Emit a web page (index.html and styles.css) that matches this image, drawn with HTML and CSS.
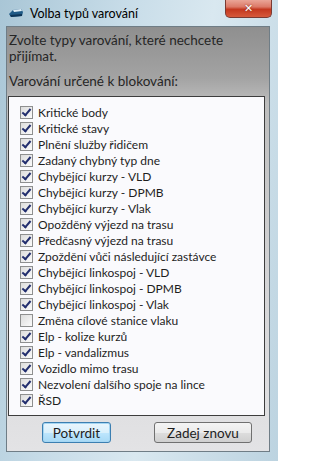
FILE: index.html
```html
<!DOCTYPE html>
<html lang="cs">
<head>
<meta charset="utf-8">
<title>Volba typů varování</title>
<link rel="stylesheet" href="styles.css">
</head>
<body>
<div class="window">
  <div class="titlebar">
    <svg class="app-icon" width="16" height="12" viewBox="0 0 16 12">
      <path d="M1 7 L5 3 L13 2 L15 5 L14 9 L3 10 Z" fill="#1f5a86"/>
      <path d="M5 3 L13 2 L14 4 L6 5 Z" fill="#dfeef6"/>
      <path d="M2 8 L14 7 L14 9 L3 10 Z" fill="#0d3557"/>
    </svg>
    <span class="title">Volba typů varování</span>
    <div class="close"><span class="close-x">✕</span></div>
  </div>
  <div class="client">
    <p class="intro">Zvolte typy varování, které nechcete přijímat.</p>
    <p class="label">Varování určené k blokování:</p>
    <div class="list">
      <div class="item"><span class="box on"></span>Kritické body</div>
      <div class="item"><span class="box on"></span>Kritické stavy</div>
      <div class="item"><span class="box on"></span>Plnění služby řidičem</div>
      <div class="item"><span class="box on"></span>Zadaný chybný typ dne</div>
      <div class="item"><span class="box on"></span>Chybějící kurzy - VLD</div>
      <div class="item"><span class="box on"></span>Chybějící kurzy - DPMB</div>
      <div class="item"><span class="box on"></span>Chybějící kurzy - Vlak</div>
      <div class="item"><span class="box on"></span>Opožděný výjezd na trasu</div>
      <div class="item"><span class="box on"></span>Předčasný výjezd na trasu</div>
      <div class="item"><span class="box on"></span>Zpoždění vůči následující zastávce</div>
      <div class="item"><span class="box on"></span>Chybějící linkospoj - VLD</div>
      <div class="item"><span class="box on"></span>Chybějící linkospoj - DPMB</div>
      <div class="item"><span class="box on"></span>Chybějící linkospoj - Vlak</div>
      <div class="item"><span class="box"></span>Změna cílové stanice vlaku</div>
      <div class="item"><span class="box on"></span>Elp - kolize kurzů</div>
      <div class="item"><span class="box on"></span>Elp - vandalizmus</div>
      <div class="item"><span class="box on"></span>Vozidlo mimo trasu</div>
      <div class="item"><span class="box on"></span>Nezvolení dalšího spoje na lince</div>
      <div class="item"><span class="box on"></span>ŘSD</div>
    </div>
    <div class="buttons">
      <button class="btn default">Potvrdit</button>
      <button class="btn">Zadej znovu</button>
    </div>
  </div>
</div>
</body>
</html>
```

FILE: styles.css
```css
html, body {
  margin: 0;
  padding: 0;
  background: #ffffff;
}

.window {
  width: 278px;
  height: 461px;
  box-sizing: border-box;
  display: flex;
  flex-direction: column;
  padding: 0 8px 9px 6px;
  background: linear-gradient(100deg, #a9c6d6 0%, #c7dce8 35%, #d9e8f0 60%, #bcd3e0 100%);
  font-family: "Lato", "Open Sans", sans-serif;
  color: #1e1e1e;
}

.titlebar {
  height: 26px;
  flex: none;
  display: flex;
  align-items: center;
  position: relative;
}

.app-icon {
  margin: 0 6px 0 2px;
}

.title {
  font-size: 12.5px;
  color: #000;
}

.close {
  position: absolute;
  top: 0;
  right: -2px;
  width: 47px;
  height: 18px;
  box-sizing: border-box;
  border: 1px solid #7a3a32;
  border-top: none;
  border-radius: 0 0 5px 5px;
  background: linear-gradient(#eaa597 0%, #dc7a68 40%, #c4381f 55%, #d65a3c 100%);
  display: flex;
  align-items: center;
  justify-content: center;
}

.close-x {
  color: #fff;
  font-family: "DejaVu Sans", sans-serif;
  font-size: 11px;
  font-weight: bold;
  line-height: 1;
  text-shadow: 0 0 2px #7a2010;
}

.client {
  flex: 1;
  display: flex;
  flex-direction: column;
  border: 1px solid #6f7d86;
  background: linear-gradient(#8f8f8f 0%, #a3a3a3 12%, #bdbdbd 18%, #d4d4d6 60%, #e3e3e5 100%);
  padding: 5px 4px 0 1px;
}

.intro {
  margin: 0 0 0 1px;
  font-size: 13.5px;
  line-height: 16px;
  color: #262626;
}

.label {
  margin: 9px 0 0 1px;
  font-size: 13.5px;
  line-height: 16px;
  color: #262626;
}

.list {
  margin-top: 7px;
  height: 320px;
  box-sizing: border-box;
  border: 1px solid #3d3d3d;
  background: #fafafd;
  padding: 7px 0 0 11px;
}

.item {
  height: 16px;
  display: flex;
  align-items: center;
  font-size: 12px;
  color: #1e1e1e;
  white-space: nowrap;
}

.box {
  width: 11px;
  height: 11px;
  flex: none;
  border: 1px solid #8e8f8f;
  background: linear-gradient(135deg, #dcdcdc, #fbfbfb);
  margin-right: 5px;
  position: relative;
}

.box.on::after {
  content: "";
  position: absolute;
  left: 3px;
  top: 0px;
  width: 3px;
  height: 7px;
  border-right: 2px solid #222e6e;
  border-bottom: 2px solid #222e6e;
  transform: rotate(40deg);
}

.buttons {
  display: flex;
  gap: 43px;
  padding: 6px 0 0 34px;
}

.btn {
  height: 21px;
  box-sizing: border-box;
  padding: 0;
  font-family: "Lato", "Open Sans", sans-serif;
  font-size: 13.5px;
  color: #1e1e1e;
  border: 1px solid #707070;
  border-radius: 3px;
  background: linear-gradient(#f4f4f4 0%, #ebebeb 50%, #dddddd 51%, #cfcfcf 100%);
  width: 98px;
}

.btn.default {
  width: 69px;
  border-color: #3c7fb1;
  background: linear-gradient(#eaf6fd 0%, #d9f0fc 50%, #bee6fd 51%, #a7d9f5 100%);
  box-shadow: 0 0 0 1px #a5d6f3 inset;
}
```
